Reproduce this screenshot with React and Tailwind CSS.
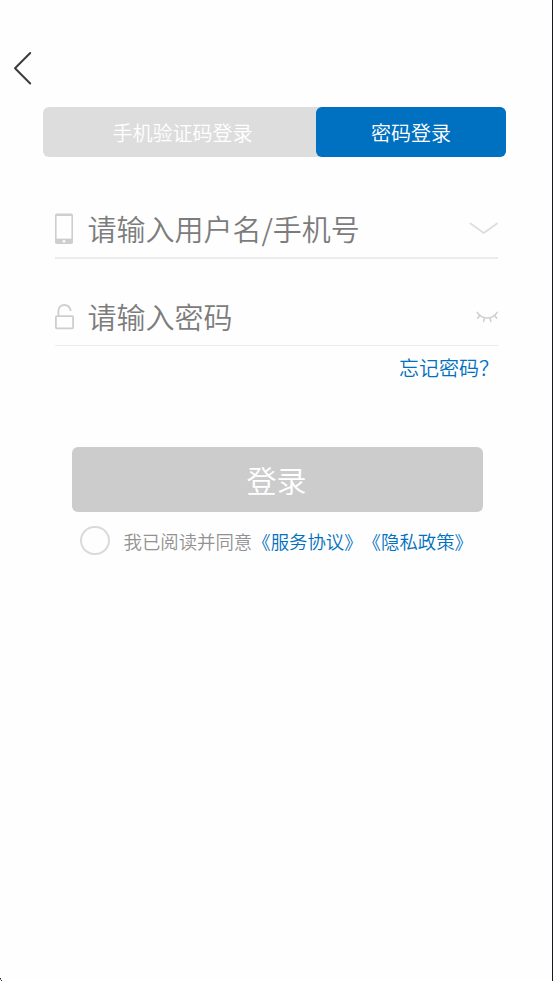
import { useState } from 'react'

const PhoneIcon = () => (
    <svg width="19" height="32" viewBox="0 0 19 32" className="shrink-0">
        <rect x="0" y="0.5" width="18" height="30.5" rx="1.8" fill="#cecece" />
        <rect x="1.6" y="3" width="14.8" height="22.6" fill="#fff" />
        <circle cx="9" cy="28.2" r="1.3" fill="#fff" />
    </svg>
)

const LockIcon = () => (
    <svg width="19" height="26" viewBox="0 0 19 26" fill="none" stroke="#cecece" strokeWidth="1.8" className="shrink-0">
        <rect x="0.9" y="12.2" width="17.2" height="12.2" rx="0.8" />
        <path d="M3.4 12V7C3.4 3.4 6 1 9.3 1c3.2 0 5.6 2 6.3 5.4" strokeLinecap="round" />
    </svg>
)

const ClosedEyeIcon = () => (
    <svg width="22" height="12" viewBox="0 0 22 12" fill="none" stroke="#cfcfcf" strokeWidth="1.6" strokeLinecap="round">
        <path d="M1.2 1.4C3.6 5 7 7 11.2 7s7.6-2 10-5.6" />
        <path d="M3.8 4.3 1.7 7.2M8.5 6.8 7.6 10.4M13.9 6.8l.9 3.6M18.6 4.3l2.1 2.9" />
    </svg>
)

const Field = ({ icon, placeholder, action, type = 'text', className }) => (
    <div className={`flex items-center border-[#ebebeb] ${className}`}>
        <div className="w-[32.5px] shrink-0">{icon}</div>
        <input
            type={type}
            placeholder={placeholder}
            className="min-w-0 flex-1 h-11 pb-[2px] bg-transparent text-[29px] text-[#333] placeholder:text-[#7c7c7c] outline-none"
        />
        <button className="shrink-0">{action}</button>
    </div>
)

const App = () => {
    const [agreed, setAgreed] = useState(false)

    return (
        <div lang="zh-CN" className="relative h-[981px] w-[553px] overflow-hidden bg-[#fefefe] border-r border-[#151723] font-['Noto_Sans_CJK_SC',sans-serif] font-[350] [text-spacing-trim:space-all]">
            <header className="h-[106px] pt-[51px] pl-[13px]">
                <button className="block">
                    <svg width="20" height="34" viewBox="0 0 20 34" fill="none" stroke="#3c3c3e" strokeWidth="2" strokeLinecap="round" strokeLinejoin="round">
                        <path d="M17.2 2 2 17.3 17.2 32.5" />
                    </svg>
                </button>
            </header>

            <div className="ml-[43px] mt-[0.5px] flex h-[50.5px] w-[463px] rounded-md bg-[#dddddd] text-[20px] leading-none text-white">
                <button className="w-[273px] pl-[6px] pt-[2px]">手机验证码登录</button>
                <button className="flex-1 rounded-md bg-[#0070c1] pt-[2px]">密码登录</button>
            </div>

            <main className="ml-[55px] w-[443px]">
                <Field
                    className="mt-[50px] h-[52px] border-b-2 pb-[7px]"
                    icon={<PhoneIcon />}
                    placeholder="请输入用户名/手机号"
                    action={
                        <svg width="30" height="13" viewBox="0 0 30 13" fill="none" stroke="#dedede" strokeWidth="1.8" strokeLinecap="round" strokeLinejoin="round">
                            <path d="M2.5 1.5 15.8 11 29 1.5" />
                        </svg>
                    }
                />
                <Field
                    className="mt-[35px] h-[52px] border-b pb-[5px]"
                    icon={<LockIcon />}
                    placeholder="请输入密码"
                    type="password"
                    action={<ClosedEyeIcon />}
                />
                <div className="-mr-px mt-[7px] flex justify-end">
                    <a href="#" className="text-[20px] leading-[30px] text-[#0070c1]">忘记密码？</a>
                </div>
            </main>

            <button className="ml-[71.5px] mt-[64px] block h-[65px] w-[411px] rounded-md bg-[#cccccc] pb-[2px] pr-px text-[30px] leading-none text-white">
                登录
            </button>

            <div className="ml-[80px] mt-[14px] flex h-[30px] items-center">
                <button
                    onClick={() => setAgreed(!agreed)}
                    className={`mb-px size-[29.5px] shrink-0 rounded-full border-2 ${agreed ? 'border-[#0070c1] bg-[#0070c1]' : 'border-[#dadada]'}`}
                />
                <p className="ml-[14px] whitespace-nowrap text-[18.4px] leading-[30px] text-[#929292]">
                    我已阅读并同意
                    <a href="#" className="text-[#0070c1]">《服务协议》</a>
                    <a href="#" className="text-[#0070c1]">《隐私政策》</a>
                </p>
            </div>

            {/* dark corner speck of the window frame */}
            <div className="absolute bottom-0 left-0 h-[3px] w-[2px]">
                <div className="size-px bg-[#222]" />
                <div className="size-px bg-[#888]" />
                <div className="ml-px size-px bg-[#333]" />
            </div>
        </div>
    )
}

export default App
